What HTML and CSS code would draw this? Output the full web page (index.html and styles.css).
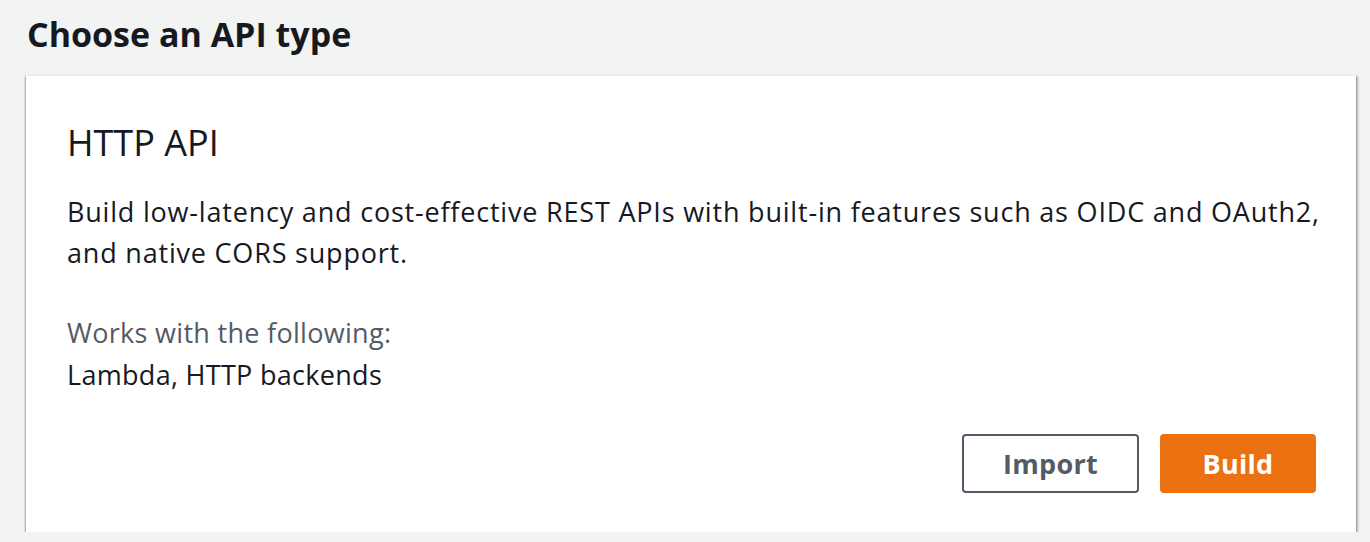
FILE: index.html
```html
<!DOCTYPE html>
<html>
<head>
<meta charset="utf-8">
<link rel="stylesheet" href="styles.css">
</head>
<body>
<div class="page">
  <h1 class="page-title">Choose an API type</h1>
  <div class="card">
    <h2 class="card-title">HTTP API</h2>
    <p class="card-desc">Build low-latency and cost-effective REST APIs with built-in features such as OIDC and OAuth2, and native CORS support.</p>
    <div class="works">
      <div class="works-label">Works with the following:</div>
      <div class="works-value">Lambda, HTTP backends</div>
    </div>
    <div class="actions">
      <button class="btn btn-normal">Import</button>
      <button class="btn btn-primary">Build</button>
    </div>
  </div>
</div>
</body>
</html>
```
FILE: styles.css
```css
html, body {
  margin: 0;
  padding: 0;
  background: #f2f3f3;
}
body {
  font-family: "Open Sans", "Noto Sans", sans-serif;
  color: #16191f;
}
.page {
  padding: 12px 14px 0 26px;
}
.page-title {
  margin: 0 0 0 1px;
  font-size: 34px;
  line-height: 45px;
  font-weight: 700;
  color: #16191f;
}
.card {
  margin-top: 18px;
  background: #fff;
  height: 457px;
  box-sizing: border-box;
  padding: 45px 8px 0 41px;
  border-top: 1px solid #e9ebed;
  box-shadow: 0 2px 2px 0 rgba(0, 28, 36, 0.45), 2px 1px 2px 0 rgba(0, 28, 36, 0.25), -1px 1px 2px 0 rgba(0, 28, 36, 0.2);
  display: flex;
  flex-direction: column;
}
.card-title {
  margin: 0;
  font-size: 36px;
  font-weight: 400;
  line-height: 44px;
}
.card-desc {
  margin: 26px 0 0;
  font-size: 27px;
  line-height: 41px;
  letter-spacing: 0.8px;
}
.works {
  margin-top: 39px;
  font-size: 27px;
  line-height: 42px;
  letter-spacing: 0.3px;
}
.works-label {
  color: #545b64;
}
.actions {
  margin-top: auto;
  margin-bottom: 39px;
  margin-right: 32px;
  display: flex;
  justify-content: flex-end;
  gap: 21px;
}
.btn {
  font-family: inherit;
  font-size: 27px;
  font-weight: 700;
  letter-spacing: 0.3px;
  height: 59px;
  border-radius: 4px;
  cursor: pointer;
  box-sizing: border-box;
  padding: 0;
}
.btn-normal {
  width: 177px;
  background: #fff;
  border: 2px solid #545b64;
  color: #545b64;
}
.btn-primary {
  width: 156px;
  background: #ec7211;
  border: 2px solid #ec7211;
  color: #fff;
}
```
